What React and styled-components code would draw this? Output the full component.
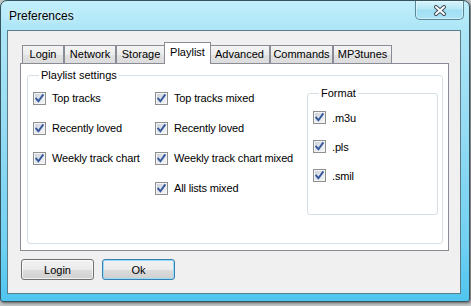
import React from 'react';
import styled, { createGlobalStyle } from 'styled-components';

const Global = createGlobalStyle`
  html, body { margin: 0; padding: 0; }
  body {
    width: 471px; height: 306px; overflow: hidden;
    background: #c4c7c7;
    font-family: "Liberation Sans", Arial, sans-serif;
  }
`;

const Window = styled.div`
  box-sizing: border-box;
  width: 470px;
  height: 302px;
  border: 1px solid #35535f;
  border-radius: 7px 7px 3px 3px;
  background: linear-gradient(to bottom, #c2effb 0%, #ade6f7 9%, #97dcf3 40%, #72d1f2 80%, #4fc5ef 100%);
  box-shadow: 1px 1px 3px rgba(0, 0, 0, 0.55);
  display: flex;
  flex-direction: column;
`;

const TitleBar = styled.div`
  height: 29px;
  flex: none;
  display: flex;
  justify-content: space-between;
  align-items: flex-start;
`;

const Title = styled.div`
  padding: 8px 0 0 8px;
  font-size: 12px;
  line-height: 15px;
  color: #000;
  text-shadow: 0 0 6px rgba(255, 255, 255, 0.9);
`;

const CloseButton = styled.div`
  box-sizing: border-box;
  width: 49px;
  height: 19px;
  margin-right: 5px;
  border: 1px solid #5a8797;
  border-top: none;
  border-radius: 0 0 5px 5px;
  background: linear-gradient(to bottom, #d6f4fc 0%, #b6e8f7 45%, #a0dff3 50%, #ace4f6 100%);
  box-shadow: inset 0 0 0 1px rgba(255, 255, 255, 0.45);
  display: flex;
  align-items: center;
  justify-content: center;
`;

const Client = styled.div`
  flex: 1;
  margin: 0 8px 7px 6px;
  border: 1px solid #5b7c89;
  background: #f0f0f0;
  display: flex;
  flex-direction: column;
  padding: 11px 11px 13px 12px;
  min-height: 0;
`;

const TabStrip = styled.div`
  display: flex;
  align-items: flex-end;
  padding-left: 2px;
  flex: none;
`;

const Tab = styled.div`
  box-sizing: border-box;
  width: ${(p) => (p.$active ? p.$w + 4 : p.$w)}px;
  height: ${(p) => (p.$active ? 22 : 18)}px;
  margin: ${(p) => (p.$active ? '0 -2px -1px -2px' : '0')};
  border: 1px solid #898c95;
  border-bottom: none;
  background: ${(p) =>
    p.$active ? '#ffffff' : 'linear-gradient(to bottom, #f4f4f4 0%, #ececec 50%, #e2e2e2 51%, #dcdcdc 100%)'};
  position: ${(p) => (p.$active ? 'relative' : 'static')};
  z-index: ${(p) => (p.$active ? 1 : 'auto')};
  font-size: 11px;
  line-height: ${(p) => (p.$active ? 18 : 17)}px;
  text-align: center;
  color: #000;
  white-space: nowrap;
`;

const Panel = styled.div`
  flex: 1;
  background: #fff;
  border: 1px solid #898c95;
  display: flex;
  flex-direction: column;
  padding: 4px 5px 6px 6px;
  min-height: 0;
`;

const Group = styled.fieldset`
  box-sizing: border-box;
  margin: 0;
  border: 1px solid #d5dfe5;
  border-radius: 3px;
  padding: 0 4px 0 5px;
  min-width: 0;
  flex: ${(p) => (p.$grow ? 1 : 'none')};
  width: ${(p) => (p.$w ? `${p.$w}px` : 'auto')};
  height: ${(p) => (p.$h ? `${p.$h}px` : 'auto')};
  margin-top: ${(p) => p.$mt || 0}px;
`;

const Legend = styled.legend`
  margin-left: 6px;
  padding: 0 2px;
  font-size: 11px;
  line-height: 14px;
  color: #000;
`;

const GroupBody = styled.div`
  display: flex;
  align-items: flex-start;
  padding-top: ${(p) => p.$pt}px;
`;

const Column = styled.div`
  width: ${(p) => (p.$w ? `${p.$w}px` : 'auto')};
  flex: none;
  display: flex;
  flex-direction: column;
`;

const Row = styled.div`
  display: flex;
  align-items: center;
  gap: 6px;
  height: ${(p) => p.$h}px;
  font-size: 11px;
  letter-spacing: -0.15px;
  color: #000;
  white-space: nowrap;
`;

const Box = styled.span`
  box-sizing: border-box;
  width: 13px;
  height: 13px;
  flex: none;
  border: 1px solid #8e8f8f;
  background: linear-gradient(135deg, #c9ced7 0%, #e4e7ec 55%, #f6f7f8 100%);
  box-shadow: inset 0 0 0 1px #f4f4f4;
  display: flex;
  align-items: center;
  justify-content: center;
`;

const ButtonRow = styled.div`
  display: flex;
  gap: 8px;
  margin-top: 8px;
  padding-left: 1px;
  flex: none;
`;

const Button = styled.button`
  box-sizing: border-box;
  width: 73px;
  height: 21px;
  padding: 0;
  border: 1px solid ${(p) => (p.$default ? '#3c7fb1' : '#707070')};
  border-radius: 3px;
  background: linear-gradient(to bottom, #f2f2f2 0%, #ebebeb 50%, #dddddd 51%, #cfcfcf 100%);
  box-shadow: inset 0 0 0 1px ${(p) => (p.$default ? '#95dcf6' : 'rgba(255,255,255,0.7)')};
  font-family: "Liberation Sans", Arial, sans-serif;
  font-size: 11px;
  color: #000;
`;

const Check = ({ label, h }) => (
  <Row $h={h}>
    <Box>
      <svg width="11" height="11" viewBox="0 0 11 11">
        <path d="M2.2 5.6 L4.4 8.2 L8.8 2.2" fill="none" stroke="#35579b" strokeWidth="1.9" strokeLinecap="square" />
      </svg>
    </Box>
    <span>{label}</span>
  </Row>
);

const tabs = [
  ['Login', 42],
  ['Network', 52],
  ['Storage', 50],
  ['Playlist', 43, true],
  ['Advanced', 61],
  ['Commands', 63],
  ['MP3tunes', 59],
];

export default function App() {
  return (
    <>
      <Global />
      <Window>
        <TitleBar>
          <Title>Preferences</Title>
          <CloseButton>
            <svg width="14" height="11" viewBox="0 0 14 11">
              <path d="M3 2 L11 9 M11 2 L3 9" stroke="#3e4d57" strokeWidth="4" strokeLinecap="round" />
              <path d="M3 2 L11 9 M11 2 L3 9" stroke="#ffffff" strokeWidth="2" strokeLinecap="round" />
            </svg>
          </CloseButton>
        </TitleBar>
        <Client>
          <TabStrip>
            {tabs.map(([name, w, active]) => (
              <Tab key={name} $w={w} $active={active}>
                {name}
              </Tab>
            ))}
          </TabStrip>
          <Panel>
            <Group $grow>
              <Legend>Playlist settings</Legend>
              <GroupBody $pt={1}>
                <Column $w={122}>
                  <Check h={30} label="Top tracks" />
                  <Check h={30} label="Recently loved" />
                  <Check h={30} label="Weekly track chart" />
                </Column>
                <Column $w={152}>
                  <Check h={30} label="Top tracks mixed" />
                  <Check h={30} label="Recently loved" />
                  <Check h={30} label="Weekly track chart mixed" />
                  <Check h={30} label="All lists mixed" />
                </Column>
                <Group $w={131} $h={129} $mt={3}>
                  <Legend>Format</Legend>
                  <GroupBody $pt={3}>
                    <Column>
                      <Check h={29} label=".m3u" />
                      <Check h={29} label=".pls" />
                      <Check h={29} label=".smil" />
                    </Column>
                  </GroupBody>
                </Group>
              </GroupBody>
            </Group>
          </Panel>
          <ButtonRow>
            <Button>Login</Button>
            <Button $default>Ok</Button>
          </ButtonRow>
        </Client>
      </Window>
    </>
  );
}
